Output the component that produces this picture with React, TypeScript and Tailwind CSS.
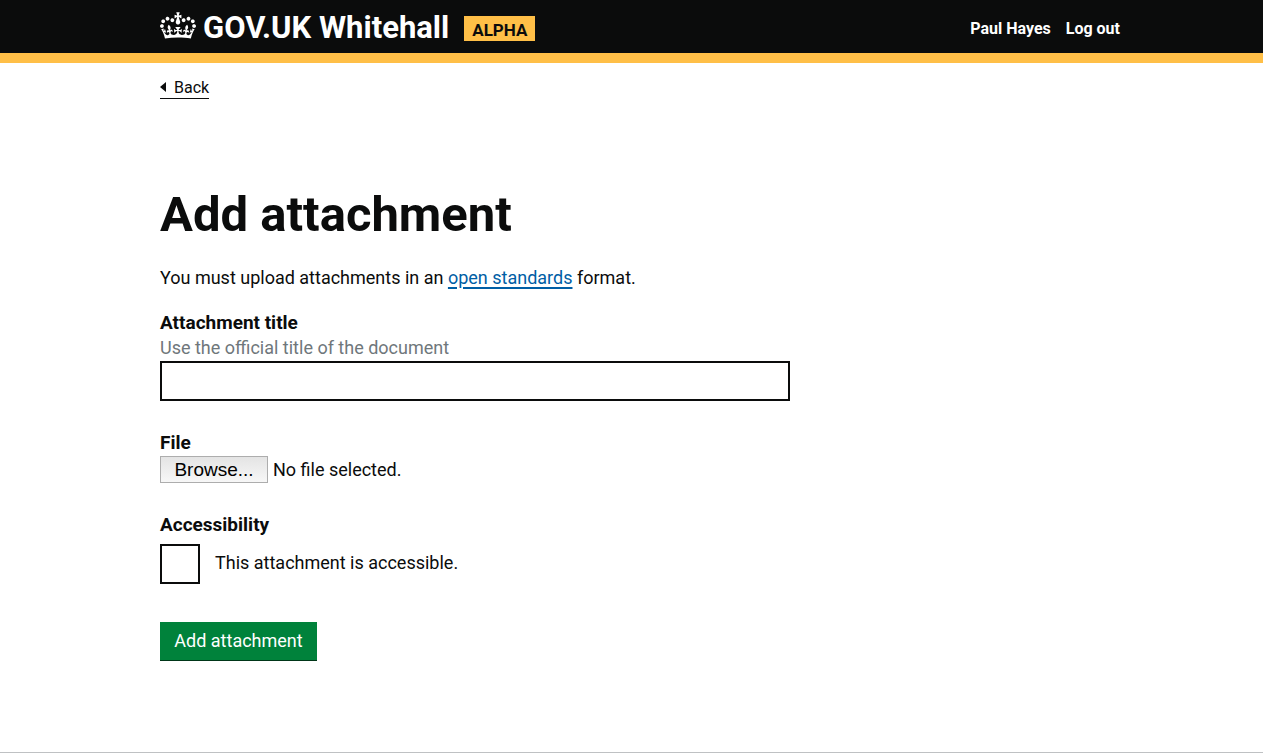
import React, { useRef, useState } from "react";

function Crown() {
  return (
    <svg viewBox="0 0 132 97" className="h-[27px] w-9 shrink-0" fill="currentColor" aria-hidden="true">
      <path
        fillRule="evenodd"
        d="M25 30.2c3.5 1.5 7.7-.2 9.1-3.7 1.5-3.6-.2-7.8-3.9-9.2-3.6-1.4-7.6.3-9.1 3.9-1.4 3.5.3 7.5 3.9 9zM9 39.5c3.6 1.5 7.8-.2 9.2-3.7 1.5-3.6-.2-7.8-3.9-9.1-3.6-1.5-7.6.2-9.1 3.8-1.4 3.5.3 7.5 3.8 9zM4.4 57.2c3.5 1.5 7.7-.2 9.1-3.8 1.5-3.6-.2-7.7-3.9-9.1-3.5-1.5-7.6.3-9.1 3.8-1.4 3.5.3 7.6 3.9 9.1zm38.3-21.4c3.5 1.5 7.7-.2 9.1-3.8 1.5-3.6-.2-7.7-3.9-9.1-3.6-1.5-7.6.3-9.1 3.8-1.3 3.6.4 7.7 3.9 9.1zm64.4-5.6c-3.6 1.5-7.8-.2-9.1-3.7-1.5-3.6.2-7.8 3.8-9.2 3.6-1.4 7.7.3 9.2 3.9 1.3 3.5-.4 7.5-3.9 9zm15.9 9.3c-3.6 1.5-7.7-.2-9.1-3.7-1.5-3.6.2-7.8 3.7-9.1 3.6-1.5 7.7.2 9.2 3.8 1.5 3.5-.3 7.5-3.8 9zm4.7 17.7c-3.6 1.5-7.8-.2-9.2-3.8-1.5-3.6.2-7.7 3.9-9.1 3.6-1.5 7.7.3 9.2 3.8 1.3 3.5-.4 7.6-3.9 9.1zM89.3 35.8c-3.6 1.5-7.8-.2-9.2-3.8-1.4-3.6.2-7.7 3.9-9.1 3.6-1.5 7.7.3 9.2 3.8 1.4 3.6-.3 7.7-3.9 9.1zM69.7 17.7l8.9 4.7V9.3l-8.9 2.8c-.2-.3-.5-.6-.9-.9L72.4 0H59.6l3.5 11.2c-.3.3-.6.5-.9.9l-8.8-2.8v13.1l8.8-4.7c.3.3.6.7.9.9l-5 15.4v.1c-.2.8-.4 1.6-.4 2.4 0 4.1 3.1 7.5 7 8.1h.2c.3 0 .7.1 1 .1.4 0 .7 0 1-.1h.2c4-.6 7.1-4.1 7.1-8.1 0-.8-.1-1.7-.4-2.4V34l-5.1-15.4c.4-.2.7-.6 1-.9zM66 92.8c16.9 0 32.8 1.1 47.1 3.2 4-16.9 8.9-26.7 14-33.5l-9.6-3.4c1 4.9 1.1 7.2 0 10.2-1.5-1.4-3-4.3-4.2-8.7L108.6 76c2.8-2 5-3.2 7.5-3.3-4.4 9.4-10 11.9-13.6 11.2-4.3-.8-6.3-4.6-5.6-7.9 1-4.7 5.7-5.9 8-.5 4.3-8.7-3-11.4-7.6-8.8 7.1-7.2 7.9-13.5 2.1-21.1-8 6.1-8.1 12.3-4.5 20.8-4.7-5.4-12.1-2.5-9.5 6.2 3.4-5.2 7.9-2 7.2 3.1-.6 4.3-6.4 7.8-13.5 7.2-10.3-.9-10.9-8-11.2-13.8 2.5-.5 7.1 1.8 11 7.3L80.2 60c-4.1 4.4-8 5.3-12.3 5.4 1.4-4.4 8-11.6 8-11.6H55.5s6.4 7.2 7.9 11.6c-4.2-.1-8-1-12.3-5.4l1.4 16.4c3.9-5.5 8.5-7.7 10.9-7.3-.3 5.8-.9 12.8-11.1 13.8-7.2.6-12.9-2.9-13.5-7.2-.7-5 3.8-8.3 7.1-3.1 2.7-8.7-4.6-11.6-9.4-6.2 3.7-8.5 3.6-14.7-4.6-20.8-5.8 7.6-5 13.9 2.2 21.1-4.7-2.6-11.9.1-7.7 8.8 2.3-5.5 7.1-4.2 8.1.5.7 3.3-1.3 7.1-5.7 7.9-3.5.7-9-1.8-13.5-11.2 2.5.1 4.7 1.3 7.5 3.3l-4.7-15.4c-1.2 4.4-2.7 7.2-4.3 8.7-1.1-3-.9-5.3 0-10.2l-9.5 3.4c5 6.9 9.9 16.7 14 33.5 14.8-2.1 30.8-3.2 47.7-3.2z"
      />
    </svg>
  );
}

function Header() {
  return (
    <header className="border-b-[10px] border-[#ffbf47] bg-[#0b0c0c] pl-[17px] text-white">
      <div className="mx-auto flex h-[53px] max-w-[960px] items-center justify-between pt-1">
        <div className="flex items-center">
          <a href="#home" className="flex items-center gap-[7px] pb-[6px]">
            <Crown />
            <span className="pt-1 text-[31px] leading-[30px] font-bold whitespace-nowrap">GOV.UK Whitehall</span>
          </a>
          <strong className="ml-[15px] flex h-[25px] items-center bg-[#ffbf47] px-2 pt-[3px] text-[17px] leading-5 font-bold text-[#0b0c0c]">
            ALPHA
          </strong>
        </div>
        <nav className="flex gap-[15px] text-base leading-5 font-bold">
          <a href="#account">Paul Hayes</a>
          <a href="#logout">Log out</a>
        </nav>
      </div>
    </header>
  );
}

function FileField() {
  const input = useRef<HTMLInputElement>(null);
  const [name, setName] = useState("");
  return (
    <div className="mt-[29px]">
      <label htmlFor="file" className="block text-[19px] leading-[25px] font-bold">
        File
      </label>
      <div className="mt-px flex items-center gap-[5px]">
        <input
          ref={input}
          id="file"
          type="file"
          className="sr-only"
          onChange={(e) => setName(e.target.files?.[0]?.name ?? "")}
        />
        <button
          type="button"
          onClick={() => input.current?.click()}
          className="h-[27px] w-[108px] border border-[#adadad] bg-linear-to-b from-[#e4e4e4] to-[#f7f7f7] font-['Liberation_Sans',Arial,sans-serif] text-[19px] leading-6 text-black"
        >
          Browse...
        </button>
        <span className="text-lg leading-[25px]">{name || "No file selected."}</span>
      </div>
    </div>
  );
}

export default function App() {
  return (
    <div className="flex min-h-screen flex-col bg-white font-[Roboto,Arial,sans-serif] text-[#0b0c0c]">
      <Header />
      <div className="grow pl-[17px]">
        <div className="mx-auto max-w-[960px]">
          <a
            href="#back"
            className="mt-[15px] inline-flex items-center gap-2 border-b border-[#0b0c0c] text-base leading-5"
          >
            <svg viewBox="0 0 6 12" className="h-3 w-[6px]" fill="currentColor" aria-hidden="true">
              <path d="M6 0v10L0 5z" />
            </svg>
            Back
          </a>
          <main className="pt-[89px] pb-20">
            <h1 className="text-[49px] leading-[50px] font-bold">Add attachment</h1>
            <p className="mt-[25px] text-lg leading-[25px]">
              You must upload attachments in an{" "}
              <a href="#standards" className="text-[#005ea5] underline decoration-2 underline-offset-3">
                open standards
              </a>{" "}
              format.
            </p>
            <form onSubmit={(e) => e.preventDefault()} className="mt-5">
              <label htmlFor="title" className="block text-[19px] leading-[25px] font-bold">
                Attachment title
              </label>
              <p id="title-hint" className="mb-px text-lg leading-[25px] text-[#6f777b]">
                Use the official title of the document
              </p>
              <input
                id="title"
                type="text"
                aria-describedby="title-hint"
                className="block h-10 w-full max-w-[630px] border-2 border-[#0b0c0c] px-1 text-lg"
              />
              <FileField />
              <fieldset className="mt-[29px]">
                <legend className="text-[19px] leading-[25px] font-bold">Accessibility</legend>
                <div className="mt-[7px] flex items-start gap-[15px]">
                  <input
                    id="accessible"
                    type="checkbox"
                    className="size-10 appearance-none border-2 border-[#0b0c0c] bg-white checked:bg-[#0b0c0c]"
                  />
                  <label htmlFor="accessible" className="pt-[6px] text-lg leading-[25px]">
                    This attachment is accessible.
                  </label>
                </div>
              </fieldset>
              <button
                type="submit"
                className="mt-[38px] flex h-[38px] w-[157px] items-center justify-center bg-[#00823b] pb-px text-lg leading-[25px] text-white shadow-[0_1px_0_#003618]"
              >
                Add attachment
              </button>
            </form>
          </main>
        </div>
      </div>
      <footer className="border-t border-[#bfc1c3]" />
    </div>
  );
}
